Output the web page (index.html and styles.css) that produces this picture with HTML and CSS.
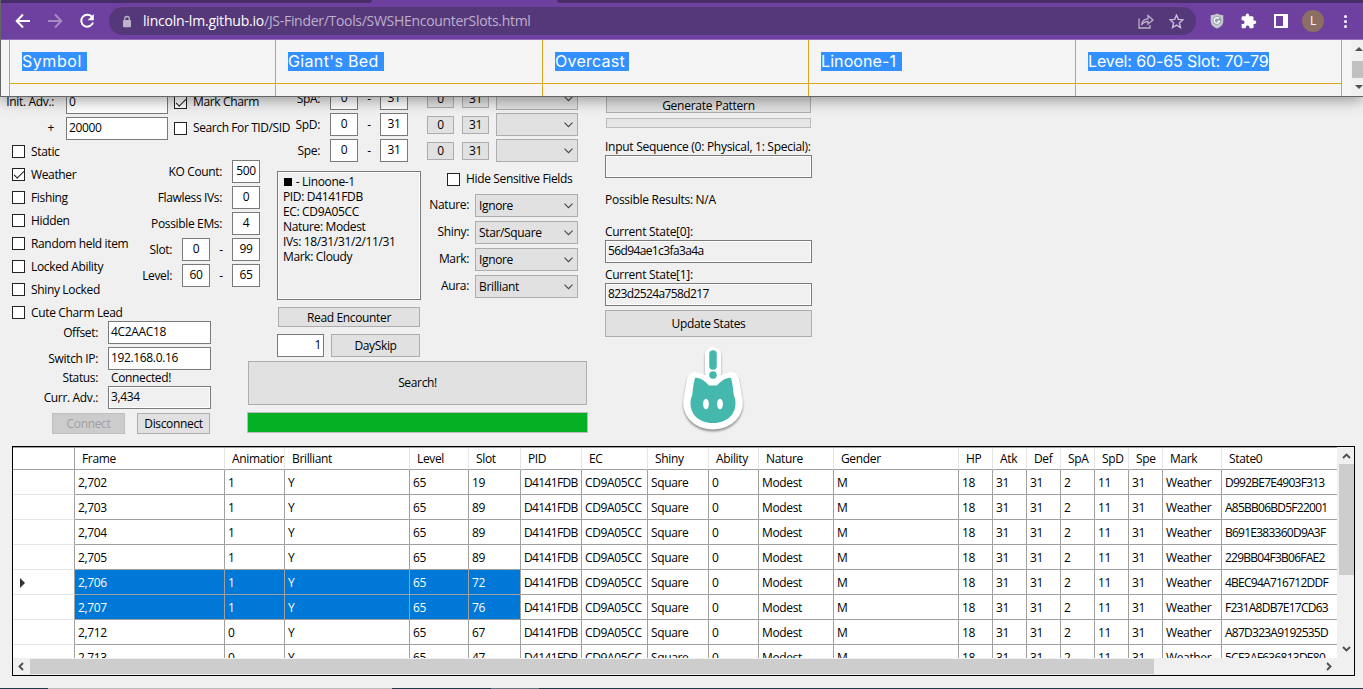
FILE: index.html
```html
<!DOCTYPE html>
<html lang="en">
<head>
<meta charset="utf-8">
<title>Encounter Search</title>
<link rel="stylesheet" href="styles.css">
</head>
<body>
<main class="app">
  <section class="form">
    <div class="left">
      <div class="adv">
        <div class="adv-row"><label class="lbl">Init. Adv.:</label><span class="box adv-in">0</span><i class="chk on"></i><span>Mark Charm</span></div>
        <div class="adv-row"><label class="lbl">+</label><span class="box adv-in">20000</span><i class="chk"></i><span class="tid">Search For TID/SID</span></div>
      </div>
      <div class="options">
        <div class="checks">
          <div><i class="chk"></i>Static</div>
          <div><i class="chk on"></i>Weather</div>
          <div><i class="chk"></i>Fishing</div>
          <div><i class="chk"></i>Hidden</div>
          <div><i class="chk"></i>Random held item</div>
          <div><i class="chk"></i>Locked Ability</div>
          <div><i class="chk"></i>Shiny Locked</div>
          <div><i class="chk"></i>Cute Charm Lead</div>
        </div>
        <div class="numbers">
          <div><span class="lbl">KO Count:</span><span class="box num">500</span></div>
          <div><span class="lbl">Flawless IVs:</span><span class="box num">0</span></div>
          <div><span class="lbl">Possible EMs:</span><span class="box num">4</span></div>
          <div><span class="lbl">Slot:</span><span class="box num">0</span><span class="dash">-</span><span class="box num">99</span></div>
          <div><span class="lbl">Level:</span><span class="box num">60</span><span class="dash">-</span><span class="box num">65</span></div>
        </div>
      </div>
      <div class="conn">
        <div class="conn-row"><span class="lbl">Offset:</span><span class="box">4C2AAC18</span></div>
        <div class="conn-row"><span class="lbl">Switch IP:</span><span class="box">192.168.0.16</span></div>
        <div class="conn-row status"><span class="lbl">Status:</span><span>Connected!</span></div>
        <div class="conn-row"><span class="lbl">Curr. Adv.:</span><span class="box ro">3,434</span></div>
        <div class="conn-btns"><span class="btn off">Connect</span><span class="btn">Disconnect</span></div>
      </div>
    </div>

    <div class="middle">
      <div class="ivs">
        <div class="iv"><span class="lbl">SpA:</span><span class="box num">0</span><span class="dash">-</span><span class="box num">31</span><span class="btn mini">0</span><span class="btn mini">31</span><span class="combo"><svg viewBox="0 0 9 6"><path d="M.5 .7l4 4 4-4"/></svg></span></div>
        <div class="iv"><span class="lbl">SpD:</span><span class="box num">0</span><span class="dash">-</span><span class="box num">31</span><span class="btn mini">0</span><span class="btn mini">31</span><span class="combo"><svg viewBox="0 0 9 6"><path d="M.5 .7l4 4 4-4"/></svg></span></div>
        <div class="iv"><span class="lbl">Spe:</span><span class="box num">0</span><span class="dash">-</span><span class="box num">31</span><span class="btn mini">0</span><span class="btn mini">31</span><span class="combo"><svg viewBox="0 0 9 6"><path d="M.5 .7l4 4 4-4"/></svg></span></div>
      </div>
      <div class="encounter">
        <div class="enc-left">
          <div class="box ro memo"><span><b class="sq"></b> - Linoone-1</span><span>PID: D4141FDB</span><span>EC: CD9A05CC</span><span>Nature: Modest</span><span>IVs: 18/31/31/2/11/31</span><span>Mark: Cloudy</span></div>
          <span class="btn read">Read Encounter</span>
          <div class="skip"><span class="box">1</span><span class="btn">DaySkip</span></div>
        </div>
        <div class="filters">
          <div class="hide"><i class="chk"></i>Hide Sensitive Fields</div>
          <div class="filter"><span class="lbl">Nature:</span><span class="combo">Ignore<svg viewBox="0 0 9 6"><path d="M.5 .7l4 4 4-4"/></svg></span></div>
          <div class="filter"><span class="lbl">Shiny:</span><span class="combo">Star/Square<svg viewBox="0 0 9 6"><path d="M.5 .7l4 4 4-4"/></svg></span></div>
          <div class="filter"><span class="lbl">Mark:</span><span class="combo">Ignore<svg viewBox="0 0 9 6"><path d="M.5 .7l4 4 4-4"/></svg></span></div>
          <div class="filter"><span class="lbl">Aura:</span><span class="combo">Brilliant<svg viewBox="0 0 9 6"><path d="M.5 .7l4 4 4-4"/></svg></span></div>
        </div>
      </div>
      <span class="btn search">Search!</span>
      <div class="progress"></div>
    </div>

    <div class="right">
      <span class="btn generate">Generate Pattern</span>
      <div class="thin"></div>
      <span class="cap seq">Input Sequence (0: Physical, 1: Special):</span>
      <span class="box ro"></span>
      <span class="cap results">Possible Results: N/A</span>
      <span class="cap">Current State[0]:</span>
      <span class="box ro">56d94ae1c3fa3a4a</span>
      <span class="cap state1">Current State[1]:</span>
      <span class="box ro">823d2524a758d217</span>
      <span class="btn update">Update States</span>
      <svg class="mascot" viewBox="0 0 64 92">
        <g class="halo"><path d="M32 11v18M14 36c5 1 9 3 13 7h10c4-4 8-6 13-7 1.500 6 2 12 3 17 3.500 15-7 24.500-21 24.500S7.500 68 11 53c1-5 1.500-11 3-17z"/></g>
        <path class="bang" d="M32 10v12"/><circle class="teal" cx="32" cy="31" r="3.800"/>
        <path class="teal" d="M14 34c4-1 10 3 14 7.500h8c4-4.500 10-8.500 14-7.500 2 6 2 13 3 18 1 2 1.500 4.500 1.500 7 0 13-10 20-22.500 20S9.500 72 9.500 59c0-2.500.5-5 1.500-7 1-5 1-12 3-18z"/>
        <ellipse class="eye" cx="25" cy="60" rx="2.900" ry="5.200"/><ellipse class="eye" cx="39" cy="60" rx="2.900" ry="5.200"/>
      </svg>
    </div>
  </section>

  <section class="grid">
    <div class="view"><table id="results"></table></div>
    <div class="vbar"><svg viewBox="0 0 9 6"><path d="M1 5l3.500-3.500L8 5"/></svg><i></i><svg viewBox="0 0 9 6"><path d="M1 1l3.500 3.500L8 1"/></svg></div>
    <div class="hbar"><svg viewBox="0 0 6 9"><path d="M5 1L1.500 4.500 5 8"/></svg><i></i><svg viewBox="0 0 6 9"><path d="M1 1l3.500 3.500L1 8"/></svg></div>
  </section>
  <footer class="taskbar"><i class="t1"></i><i class="t2"></i><i class="t3"></i><i class="t4"></i></footer>
</main>

<section class="browser">
  <div class="tabs"><i class="tab-a"></i><i class="tab-b"></i></div>
  <div class="toolbar">
    <svg class="nav" viewBox="0 0 16 16"><path d="M15 8H2M8 1.500L1.700 8 8 14.500"/></svg>
    <svg class="nav dim" viewBox="0 0 16 16"><path d="M1 8h13M8 1.500L14.300 8 8 14.500"/></svg>
    <svg class="nav" viewBox="0 0 16 16"><path d="M13.200 4.200A6 6 0 1 0 14 9.500"/><path class="solid" d="M14.800 1v6.200H8.600z"/></svg>
    <div class="omni">
      <svg class="lock" viewBox="0 0 10 12"><path d="M2.700 5V3.300a2.300 2.300 0 0 1 4.600 0V5"/><rect x="1" y="4.500" width="8" height="7.200" rx="1"/></svg>
      <span class="url"><b>lincoln-lm.github.io</b>/JS-Finder/Tools/SWSHEncounterSlots.html</span>
      <svg class="share" viewBox="0 0 16 15"><path d="M1 4.500v9.500h11v-3M3.500 11C4 7 6 5 10 4.800V1.500L15 6l-5 4.200V7.500C7 7.500 5.200 8.500 3.500 11z"/></svg>
      <svg class="star" viewBox="0 0 14 14"><path d="M7 1l1.700 4 4.300.4-3.300 2.900 1 4.300L7 10.300l-3.700 2.300 1-4.300L1 5.400 5.300 5z"/></svg>
    </div>
    <svg class="shield" viewBox="0 0 14 16"><path d="M7 .5c2 1.200 4 1.600 6.300 1.700v5.500c0 4-2.600 6.500-6.300 7.800C3.300 14.200.7 11.700.7 7.700V2.200C3 2.100 5 1.700 7 .5z" fill="#c3c8ce"/><circle cx="7" cy="7.500" r="4.300" fill="#929aa3"/><path d="M9 5.800A2.700 2.700 0 1 0 9.500 8.300H7.500" fill="none" stroke="#f3f5f7" stroke-width="1.500"/></svg>
    <svg class="puzzle" viewBox="0 0 16 16"><path fill="#fff" d="M13.500 7.500h-1V4.600c0-.8-.6-1.400-1.400-1.400H8.200v-1a1.700 1.700 0 0 0-3.500 0v1H2C1.200 3.200.6 3.800.6 4.600v2.700h1a1.900 1.900 0 0 1 0 3.800h-1v2.800c0 .8.600 1.400 1.400 1.400h2.700v-1a1.900 1.900 0 0 1 3.800 0v1h2.700c.8 0 1.400-.6 1.400-1.400V11h1a1.700 1.700 0 0 0-.1-3.500z"/></svg>
    <i class="side"></i>
    <span class="avatar">L</span>
    <span class="dots"><i></i><i></i><i></i></span>
  </div>
  <div class="page">
    <div class="slots">
      <div><span class="s1">Symbol</span></div><div><span class="s2">Giant's Bed</span></div><div><span class="s3">Overcast</span></div><div><span class="s4">Linoone-1</span></div><div><span class="s5">Level: 60-65 Slot: 70-79</span></div>
      <div></div><div></div><div></div><div></div><div></div>
    </div>
    <div class="pagebar"><i class="up"></i><i class="thumb"></i><i class="down"></i></div>
  </div>
</section>
<script src="script.js"></script>
</body>
</html>
```
FILE: script.js
```js
const columns = [
  ["", 62], ["Frame", 150], ["Animation", 60], ["Brilliant", 125], ["Level", 59], ["Slot", 52],
  ["PID", 61], ["EC", 66], ["Shiny", 61], ["Ability", 50], ["Nature", 75], ["Gender", 125],
  ["HP", 34], ["Atk", 34], ["Def", 34], ["SpA", 34], ["SpD", 34], ["Spe", 34], ["Mark", 59], ["State0", 125]
];
const shared = ["D4141FDB", "CD9A05CC", "Square", "0", "Modest", "M", "18", "31", "31", "2", "11", "31", "Weather"];
const frames = [
  ["2,702", "1", "19", "D992BE7E4903F313"],
  ["2,703", "1", "89", "A85BB06BD5F22001"],
  ["2,704", "1", "89", "B691E383360D9A3F"],
  ["2,705", "1", "89", "229BB04F3B06FAE2"],
  ["2,706", "1", "72", "4BEC94A716712DDF"],
  ["2,707", "1", "76", "F231A8DB7E17CD63"],
  ["2,712", "0", "67", "A87D323A9192535D"],
  ["2,713", "0", "47", "5CE3AF636813DE80"]
];
const group = columns.map(c => `<col style="width:${c[1]}px">`).join("");
const head = columns.map(c => `<th>${c[0]}</th>`).join("");
const body = frames.map(([frame, anim, slot, state], r) => {
  const cells = ["", frame, anim, "Y", "65", slot, ...shared, state];
  const selected = r === 4 || r === 5;
  return "<tr>" + cells.map((text, c) => {
    const cls = selected && c > 0 && c < 6 ? ' class="sel"' : "";
    return `<td${cls}>${c === 0 && r === 4 ? '<i class="current"></i>' : text}</td>`;
  }).join("") + "</tr>";
}).join("");
document.getElementById("results").innerHTML = `<colgroup>${group}</colgroup><tr>${head}</tr>${body}`;
```
FILE: styles.css
```css
* { box-sizing: border-box; }
body { margin: 0; width: 1363px; height: 689px; overflow: hidden; background: #f0f0f0; font: 12px/16px "Open Sans", "Noto Sans", sans-serif; letter-spacing: -0.35px; color: #000; white-space: nowrap; }
i { font-style: normal; display: block; flex: none; }
.app { height: 689px; display: flex; flex-direction: column; }
.form { display: flex; height: 446px; padding-top: 84px; flex: none; }

/* controls */
.box { display: block; height: 23px; border: 1px solid #7a7a7a; background: #fff; padding: 2px 2px; flex: none; }
.ro { background: #f0f0f0; box-shadow: inset 0 0 0 1px #fff; }
.num { width: 28px; text-align: center; padding: 2px 0; }
.btn { display: flex; align-items: center; justify-content: center; border: 1px solid #adadad; background: #e1e1e1; flex: none; }
.btn.off { background: #ccc; border-color: #bfbfbf; color: #a0a0a0; }
.chk { width: 13px; height: 13px; border: 1px solid #222; background: #fff; }
.chk.on::after { content: ""; display: block; width: 9px; height: 4px; margin: 2px 0 0 1px; border: solid #222; border-width: 0 0 1.300px 1.300px; transform: rotate(-45deg); }
.lbl { text-align: right; flex: none; }
.dash { width: 22px; text-align: center; flex: none; }
.combo { display: flex; align-items: center; justify-content: space-between; height: 23px; border: 1px solid #adadad; background: #e1e1e1; padding: 0 4px 0 3px; flex: none; }
.combo svg { width: 9px; height: 6px; margin-left: auto; }
.combo path { fill: none; stroke: #444; stroke-width: 1.100; }

/* left column */
.left { width: 247px; flex: none; padding-top: 7px; }
.adv { display: grid; gap: 3px; }
.adv-row { display: flex; align-items: center; height: 23px; padding-bottom: 1px; }
.adv-row .lbl { width: 54px; }
.adv-in { width: 102px; margin: 1px 6px 0 12px; }
.adv-row .chk { margin-right: 6px; }
.tid { letter-spacing: -0.4px; }
.options { display: flex; }
.checks { width: 132px; padding-left: 12px; }
.checks div { display: flex; align-items: center; gap: 6px; height: 23px; }
.numbers { display: grid; grid-auto-rows: 23px; gap: 3px; width: 128px; padding-top: 20px; flex: none; align-content: start; }
.numbers div { display: flex; justify-content: flex-end; align-items: center; }
.numbers .lbl { margin-right: 10px; }
.conn { display: grid; gap: 3px; margin-top: -3px; }
.conn-row { display: flex; gap: 10px; align-items: center; }
.conn-row .lbl { width: 98px; }
.conn-row .box { width: 103px; }
.status { height: 16px; margin: -3px 0; gap: 13px; }
.conn-btns { display: flex; gap: 12px; padding: 1px 0 0 52px; }
.conn-btns .btn { width: 73px; height: 21px; }
.numbers { position: relative; left: 0; }
.numbers { margin-right: -13px; }

/* middle column */
.middle { width: 358px; flex: none; padding-top: 3px; }
.ivs { display: grid; gap: 3px; padding-left: 40px; }
.iv { display: flex; height: 23px; align-items: center; }
.iv .lbl { width: 33px; margin-right: 10px; }
.mini { width: 27px; height: 18px; margin-right: 8px; padding-top: 1px; }
.dash + .num + .mini { margin-left: 19px; }
.mini + .combo { margin-left: -1px; }
.iv .combo { width: 82px; }
.encounter { display: flex; padding: 9px 0 0 30px; }
.enc-left { width: 144px; flex: none; }
.memo { height: 129px; line-height: 15px; padding: 2px 5px; }
.memo span { display: block; }
.sq { display: inline-block; width: 8px; height: 8px; background: #000; margin: 0 1px; }
.read { width: 142px; height: 20px; margin: 7px 0 7px 1px; padding-top: 1px; }
.skip { display: flex; gap: 7px; }
.skip .box { width: 47px; text-align: right; }
.skip .btn { width: 89px; height: 23px; }
.filters { display: grid; gap: 4px; align-content: start; }
.hide { display: flex; gap: 6px; align-items: center; height: 16px; margin: 0 0 3px 26px; }
.filter { display: flex; gap: 6px; }
.filter .lbl { width: 48px; line-height: 21px; }
.filter .combo { width: 103px; }
.search { height: 44px; width: 339px; margin: 4px 0 7px 1px; }
.progress { width: 341px; height: 21px; background: #06b025; border: 1px solid #bcbcbc; }

/* right column */
.right { width: 207px; flex: none; padding-top: 9px; }
.generate { height: 20px; margin: 0 1px; padding-top: 6px; letter-spacing: -0.25px; }
.thin { height: 10px; margin: 5px 1px 0; border: 1px solid #bcbcbc; background: #e6e6e6; }
.cap { display: block; height: 16px; letter-spacing: -0.28px; }
.seq { margin: 11px 0 0; }
.results { margin: 14px 0 16px; }
.state1 { margin-top: 4px; }
.right .ro { letter-spacing: -0.62px; }
.right .update { height: 27px; margin-top: 4px; }
.mascot { display: block; width: 64px; height: 92px; margin: 7px 0 0 76px; overflow: visible; }
.halo { filter: drop-shadow(0 2px 1px rgba(0,0,0,.4)); }
.halo path { fill: #fff; stroke: #fff; stroke-width: 16; stroke-linejoin: round; stroke-linecap: round; }
.teal { fill: #44b8ac; }
.bang { stroke: #44b8ac; stroke-width: 7.500; stroke-linecap: round; }
.eye { fill: #fff; }

/* results grid */
.grid { width: 1343px; height: 230px; margin-left: 12px; border: 1px solid #000; display: grid; grid-template: 211px 17px / 1325px 16px; flex: none; }
.view { overflow: hidden; background: #fff; border-top: 1px solid #a0a0a0; border-left: 0; width: 1324px; }
table { table-layout: fixed; width: 1334px; border-collapse: separate; border-spacing: 0; }
th, td { overflow: hidden; text-align: left; font-weight: 400; padding: 2px 0 0 3px; border: solid #a0a0a0; border-width: 0 1px 1px 0; height: 25px; white-space: nowrap; }
th { height: 22px; padding: 0 0 0 7px; border-right-color: #e5e5e5; }
td:first-child { border-bottom-color: #e5e5e5; }
th:first-child { border-right-color: #a0a0a0; }
td:nth-child(7) { letter-spacing: -0.65px; }
td:last-child { letter-spacing: -0.75px; }
.sel { background: #0078d7; color: #fff; }
.current { width: 0; height: 0; border: 5px solid transparent; border-left-color: #333; border-right: 0; margin-left: 4px; }
.vbar { background: #f0f0f0; display: flex; flex-direction: column; align-items: center; padding: 6px 0; }
.vbar i { width: 15px; height: 111px; background: #cdcdcd; margin-top: 5px; }
.vbar svg { width: 9px; height: 6px; }
.vbar svg:last-child { margin-top: auto; }
.grid svg path { fill: none; stroke: #505050; stroke-width: 1.900; }
.hbar { grid-column: 1 / 3; background: #f0f0f0; display: flex; align-items: center; padding-left: 5px; }
.hbar svg { width: 6px; height: 9px; }
.hbar i { width: 1124px; height: 15px; background: #cdcdcd; margin-left: 6px; }
.hbar svg:last-child { margin-left: 172px; }
.taskbar { height: 1px; margin-top: 12px; display: flex; background: #24394a; }
.taskbar i { height: 1px; }
.t1 { width: 48px; } .t2 { width: 344px; background: #bbb; } .t3 { width: 99px; } .t4 { width: 48px; background: #66727c; }

/* browser window stacked over the form */
.browser { position: absolute; left: 0; top: 0; width: 1363px; height: 97px; border-left: 1px solid #666; border-bottom: 1px solid #666; box-shadow: 0 3px 14px rgba(0,0,0,.38); background: #f5f5f5; }
.tabs { height: 3px; background: #6e41a0; display: flex; justify-content: space-between; }
.tab-a { width: 371px; height: 3px; background: #482d69; border-bottom-right-radius: 4px; }
.tab-b { width: 806px; height: 3px; background: #482d69; border-bottom-left-radius: 4px; }
.toolbar { height: 37px; background: #6e41a0; border-bottom: 1px solid #8f6bb8; display: flex; align-items: center; padding-left: 14px; }
.nav { width: 16px; height: 16px; margin-right: 16px; fill: none; stroke: #fff; stroke-width: 2; flex: none; }
.nav .solid { fill: #fff; stroke: none; }
.dim { stroke: #a58bc4; }
.omni { width: 1087px; height: 28px; margin-left: -2px; border-radius: 14px; background: #55387a; display: flex; align-items: center; padding-left: 13px; flex: none; }
.lock { width: 10px; height: 13px; fill: #bcb2c9; }
.lock path { fill: none; stroke: #bcb2c9; stroke-width: 1.300; }
.url { margin-left: 11px; font-size: 14px; line-height: 20px; letter-spacing: -0.3px; color: #bdb0cc; width: 995px; }
.url b { font-weight: 400; color: #fff; letter-spacing: -0.2px; }
.share { width: 16px; height: 15px; fill: none; stroke: #bcb0cb; stroke-width: 1.300; }
.star { width: 15px; height: 15px; margin-left: 15px; fill: none; stroke: #c9bdd6; stroke-width: 1.300; }
.shield { width: 14px; height: 16px; margin-left: 14px; }
.puzzle { width: 16px; height: 16px; margin-left: 17px; }
.side { width: 14px; height: 14px; margin-left: 17px; border: 2px solid #fff; border-right-width: 5px; }
.avatar { width: 22px; height: 22px; border-radius: 50%; background: #8d6e63; color: #fff; text-align: center; line-height: 22px; margin-left: 14px; }
.dots { display: grid; gap: 2px; margin-left: 20px; }
.dots i { width: 3px; height: 3px; border-radius: 50%; background: #fff; }
.page { height: 56px; display: flex; padding-left: 8px; overflow: hidden; }
.slots { width: 1333px; display: grid; grid-template: 44px 12px / 266px 267px 266px 267px 266px; border-left: 1px solid #daa520; flex: none; }
.slots div { border: solid #daa520; border-width: 0 1px 1px 0; padding: 12px 0 0 12px; overflow: hidden; }
.slots div:nth-child(n+6) { border-bottom: 0; }
.slots span { display: block; height: 19px; line-height: 19px; font-family: Inter, sans-serif; font-size: 16px; letter-spacing: 0; color: #fff; background: #3390ff; }
.slots .s1 { width: 65px; letter-spacing: 0.55px; }
.slots .s2 { width: 96px; letter-spacing: 0.35px; }
.slots .s3 { width: 74px; letter-spacing: 0.25px; }
.slots .s4 { width: 81px; letter-spacing: 0.1px; }
.slots .s5 { width: 181px; letter-spacing: -0.12px; }
.pagebar { width: 12px; margin-left: 9px; background: #f1f1f1; display: flex; flex-direction: column; align-items: flex-end; }
.up { border: 4px solid transparent; border-top: 0; border-bottom-color: #505050; margin-top: 7px; }
.thumb { width: 11px; height: 17px; background: #c1c1c1; margin: 10px 0 7px; }
.down { border: 4px solid transparent; border-bottom: 0; border-top-color: #505050; }
```
